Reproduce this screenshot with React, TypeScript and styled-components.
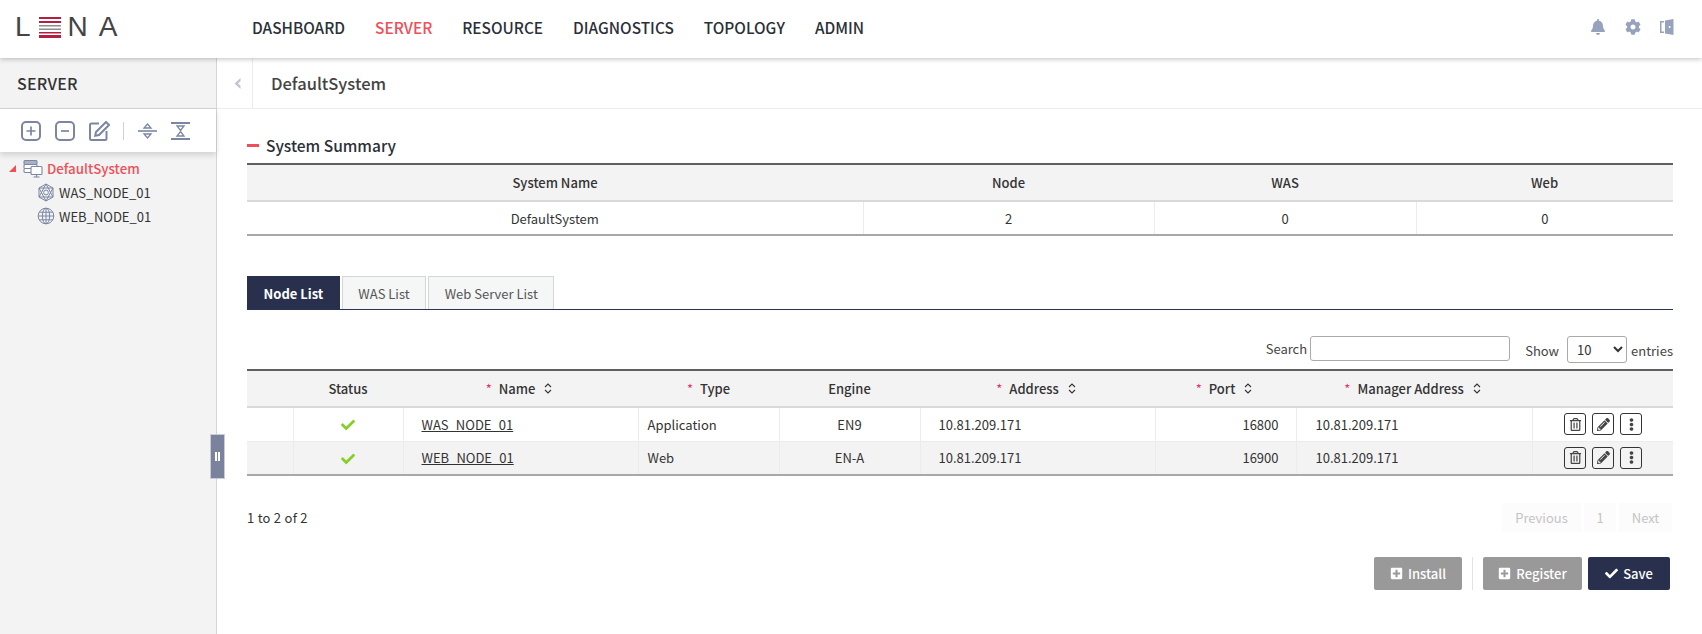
import React, { FC, ReactNode } from 'react';
import styled, { createGlobalStyle } from 'styled-components';
import { FaBell, FaCog, FaCheck, FaRegTrashAlt, FaPencilAlt, FaEllipsisV, FaPlusSquare } from 'react-icons/fa';

const GlobalStyle = createGlobalStyle`
  html, body {
    margin: 0;
    padding: 0;
    height: 100%;
    background: #fff;
    font-family: "Noto Sans CJK KR", "Noto Sans", sans-serif;
    font-size: 13px;
    color: #333;
  }
  * { box-sizing: border-box; }
`;

const Page = styled.div`
  width: 1702px;
  height: 634px;
  display: flex;
  flex-direction: column;
  overflow: hidden;
`;

const Header = styled.header`
  height: 58px;
  flex: none;
  display: flex;
  align-items: center;
  background: #fff;
  box-shadow: 0 1px 5px rgba(0, 0, 0, 0.25);
  position: relative;
  z-index: 3;
  padding: 0 0 4px 15px;
`;

const Logo = styled.div`
  width: 237px;
  flex: none;
  display: flex;
  align-items: center;
  font-family: "Liberation Sans", sans-serif;
  font-size: 28px;
  line-height: 28px;
  color: #444;
`;

const LogoLetter = styled.span<{ $gap: number }>`
  margin-right: ${(p) => p.$gap}px;
  svg { display: block; }
`;

const Nav = styled.nav`
  display: flex;
  gap: 30px;
  flex: 1;
`;

const NavItem = styled.a<{ $active?: boolean }>`
  font-size: 15.4px;
  font-weight: 500;
  color: ${(p) => (p.$active ? '#ee4f58' : '#2b2f38')};
`;

const HeaderIcons = styled.div`
  display: flex;
  align-items: center;
  gap: 19px;
  padding-right: 28px;
  color: #97a3bd;
  font-size: 16px;
  svg { display: block; }
`;

const Body = styled.div`
  flex: 1;
  display: flex;
  min-height: 0;
`;

const Sidebar = styled.aside`
  width: 217px;
  flex: none;
  background: #f3f3f3;
  border-right: 1px solid #d5d5d5;
  position: relative;
`;

const SidebarTitle = styled.div`
  height: 51px;
  padding: 0 17px;
  display: flex;
  align-items: center;
  font-size: 16px;
  font-weight: 500;
  letter-spacing: 0.2px;
  color: #333;
  border-bottom: 1px solid #d5d5d5;
`;

const TreeToolbar = styled.div`
  height: 43px;
  background: #fff;
  box-shadow: 0 3px 6px rgba(0, 0, 0, 0.14);
  display: flex;
  align-items: center;
  padding-left: 21px;
  color: #7c86a3;
  svg { display: block; }
`;

const ToolButton = styled.span<{ $gap?: number }>`
  margin-right: ${(p) => p.$gap ?? 14}px;
`;

const ToolDivider = styled.span`
  width: 1px;
  height: 18px;
  background: #d0d0d0;
  margin: 0 14px 0 0;
`;

const Tree = styled.div`
  padding-top: 4px;
`;

const TreeRow = styled.div<{ $root?: boolean }>`
  height: 24px;
  display: flex;
  align-items: center;
  gap: 4px;
  padding-left: ${(p) => (p.$root ? 9 : 37)}px;
  color: ${(p) => (p.$root ? '#ee4f58' : '#333')};
  font-weight: ${(p) => (p.$root ? 500 : 400)};
  font-size: ${(p) => (p.$root ? 13.3 : 13)}px;
  svg { flex: none; }
`;

const Caret = styled.span`
  width: 0;
  height: 0;
  border-style: solid;
  border-width: 0 0 7px 7px;
  border-color: transparent transparent #ee4f58 transparent;
  margin-right: 3px;
`;

const Handle = styled.div`
  position: absolute;
  left: 210px;
  top: 376px;
  width: 15px;
  height: 45px;
  background: #7a829c;
  border: 1px solid #c9ccd6;
  display: flex;
  align-items: center;
  justify-content: center;
  gap: 1px;
  z-index: 2;
`;

const HandleBar = styled.span`
  width: 2px;
  height: 9px;
  background: #fff;
`;

const Main = styled.main`
  flex: 1;
  min-width: 0;
`;

const SubHeader = styled.div`
  height: 51px;
  display: flex;
  align-items: stretch;
  border-bottom: 1px solid #ececec;
`;

const CollapseCell = styled.div`
  width: 36px;
  padding-left: 5px;
  display: flex;
  align-items: center;
  justify-content: center;
  border-right: 1px solid #ececec;
  color: #c3c6cd;
`;

const PageTitle = styled.div`
  display: flex;
  align-items: center;
  padding-left: 18px;
  font-size: 16.5px;
  font-weight: 500;
  color: #444;
`;

const Content = styled.div`
  padding: 0 29px 0 30px;
`;

const SectionTitle = styled.h2`
  margin: 0;
  height: 54px;
  padding-top: 18px;
  display: flex;
  align-items: center;
  gap: 7px;
  font-size: 15.5px;
  line-height: 22px;
  font-weight: 500;
  color: #2b2f38;
`;

const SectionDash = styled.span`
  width: 12px;
  height: 3px;
  background: #ee4f58;
`;

const Table = styled.table`
  width: 1426px;
  table-layout: fixed;
  border-collapse: collapse;
  border-top: 2px solid #5f5f5f;
  border-bottom: 2px solid #a8a8a8;
`;

const Th = styled.th<{ $sortable?: boolean }>`
  height: 37px;
  padding: 0 ${(p) => (p.$sortable ? 3 : 0)}px 0 0;
  background: #f3f3f3;
  border-bottom: 2px solid #d9d9d9;
  font-weight: 500;
  color: #333;
  text-align: center;
`;

const Tr = styled.tr<{ $alt?: boolean }>`
  background: ${(p) => (p.$alt ? '#f3f3f3' : '#fff')};
`;

const Td = styled.td<{ $align?: string; $pad?: number }>`
  height: 34px;
  padding: 0 ${(p) => p.$pad ?? 0}px;
  border-left: 1px solid #ececec;
  border-top: 1px solid #ececec;
  text-align: ${(p) => p.$align ?? 'center'};
  color: #333;
  &:first-child { border-left: 0; }
`;

const Tabs = styled.div`
  margin-top: 40px;
  height: 34px;
  display: flex;
  gap: 2px;
  border-bottom: 1px solid #2b3350;
`;

const Tab = styled.div<{ $active?: boolean }>`
  height: 33px;
  padding: 0 15.5px;
  display: flex;
  align-items: center;
  font-weight: ${(p) => (p.$active ? 700 : 400)};
  color: ${(p) => (p.$active ? '#fff' : '#555')};
  background: ${(p) => (p.$active ? '#28304d' : '#f5f6f6')};
  border: 1px solid ${(p) => (p.$active ? '#28304d' : '#d6d6d6')};
  border-bottom: 0;
`;

const TableControls = styled.div`
  height: 59px;
  display: flex;
  justify-content: flex-end;
  align-items: flex-start;
  padding-top: 26px;
  color: #444;
`;

const Label = styled.span`
  line-height: 25px;
`;

const SearchInput = styled.input`
  width: 200px;
  height: 25px;
  margin: 0 15px 0 3px;
  border: 1px solid #aaa;
  border-radius: 3px;
  background: #fff;
`;

const PageSize = styled.select`
  width: 60px;
  height: 27px;
  margin: 0 4px 0 8px;
  padding-left: 5px;
  border: 1px solid #aaa;
  border-radius: 3px;
  background: #fff;
  font: inherit;
  color: #333;
`;

const ShowLabel = styled(Label)`
  line-height: 27px;
  padding-top: 1px;
`;

const HeadLabel = styled.span`
  display: inline-flex;
  align-items: center;
  gap: 9px;
`;

const Required = styled.span`
  color: #e8346a;
  font-weight: 400;
  margin-right: 7px;
`;

const NodeLink = styled.a`
  color: #333;
  text-decoration: underline;
`;

const OkIcon = styled(FaCheck)`
  color: #85d02a;
  font-size: 14px;
  vertical-align: middle;
  position: relative;
  top: -1px;
`;

const Actions = styled.div`
  display: flex;
  justify-content: flex-end;
  gap: 6px;
  padding-right: 31px;
`;

const ActionButton = styled.button`
  width: 22px;
  height: 22px;
  padding: 0;
  display: flex;
  align-items: center;
  justify-content: center;
  background: transparent;
  border: 1px solid #333;
  border-radius: 3px;
  color: #444;
  font-size: 13px;
`;

const Footer = styled.div`
  margin-top: 27px;
  height: 29px;
  display: flex;
  justify-content: space-between;
  align-items: center;
`;

const FooterInfo = styled.span`
  letter-spacing: 0.25px;
`;

const Pager = styled.div`
  display: flex;
  gap: 3px;
  margin-right: 1px;
`;

const PagerItem = styled.span<{ $w: number }>`
  width: ${(p) => p.$w}px;
  height: 29px;
  display: flex;
  align-items: center;
  justify-content: center;
  background: #fcfcfc;
  color: #c4c4c4;
`;

const ButtonRow = styled.div`
  margin-top: 25px;
  display: flex;
  justify-content: flex-end;
  align-items: center;
  padding-right: 3px;
`;

const Button = styled.button<{ $primary?: boolean; $w: number; $gap?: number }>`
  width: ${(p) => p.$w}px;
  height: 33px;
  margin-left: ${(p) => p.$gap ?? 0}px;
  display: flex;
  align-items: center;
  justify-content: center;
  gap: 5px;
  border: 0;
  border-radius: 2px;
  background: ${(p) => (p.$primary ? '#28304d' : '#999')};
  color: #fff;
  font: inherit;
  font-weight: 500;
`;

const ButtonDivider = styled.span`
  width: 1px;
  height: 33px;
  background: #e2e2e2;
  margin: 0 10px 0 10px;
`;

const SortIcon: FC = () => (
  <svg width="8" height="11" viewBox="0 0 8 11" fill="none" stroke="#333" strokeWidth="1.1">
    <path d="M1 4l3-3 3 3M1 7l3 3 3-3" />
  </svg>
);

const ExitIcon: FC = () => (
  <svg width="14" height="16" viewBox="0 0 14 16" fill="#97a3bd">
    <path d="M0 2h4v1.4H1.5v9.2H4V14H0z" />
    <path d="M5 1.5L13.5 0v16L5 14.5zM9.6 7a1 1 0 100 2 1 1 0 000-2z" fillRule="evenodd" />
  </svg>
);

const SquarePlus: FC = () => (
  <svg width="20" height="20" viewBox="0 0 20 20" fill="none" stroke="currentColor" strokeWidth="2">
    <rect x="1" y="1" width="18" height="18" rx="4" />
    <path d="M10 5.5v9M5.5 10h9" strokeWidth="1.7" />
  </svg>
);

const SquareMinus: FC = () => (
  <svg width="20" height="20" viewBox="0 0 20 20" fill="none" stroke="currentColor" strokeWidth="2">
    <rect x="1" y="1" width="18" height="18" rx="4" />
    <path d="M6 10h8" strokeWidth="1.7" />
  </svg>
);

const SquareEdit: FC = () => (
  <svg width="21" height="20" viewBox="0 0 21 20" fill="none" stroke="currentColor" strokeWidth="2">
    <path d="M10 2.5H2.5a1.5 1.5 0 00-1.5 1.5v13.5A1.5 1.5 0 002.5 19H16a1.5 1.5 0 001.5-1.5V10" />
    <path d="M7 11l10-10 3 3-10 10-3.8.8z" />
  </svg>
);

const ExpandIcon: FC = () => (
  <svg width="19" height="18" viewBox="0 0 19 18" fill="none" stroke="currentColor" strokeWidth="1.3">
    <path d="M0 9h19" strokeWidth="1.6" />
    <path d="M9.5 2l3.5 4H6zM9.5 16l3.5-4H6z" />
  </svg>
);

const CollapseIcon: FC = () => (
  <svg width="19" height="18" viewBox="0 0 19 18" fill="none" stroke="currentColor" strokeWidth="1.3">
    <path d="M0 1h19M0 17h19" strokeWidth="1.8" />
    <path d="M9.5 8.5l3.5-4.5H6zM9.5 9.5L13 14H6z" />
  </svg>
);

const SystemIcon: FC = () => (
  <svg width="20" height="19" viewBox="0 0 20 19" fill="#fff" stroke="#7c86a3" strokeWidth="1.1">
    <rect x="1" y="1.5" width="13" height="4" rx="1" fill="#a9b0c4" />
    <rect x="1" y="5.5" width="13" height="4" rx="1" />
    <rect x="1" y="9.5" width="8" height="4" rx="1" />
    <rect x="8" y="7.5" width="11" height="8" rx="1" />
    <path d="M13.5 15.5v2M10.5 18h6" />
  </svg>
);

const ClusterIcon: FC = () => (
  <svg width="18" height="19" viewBox="0 0 18 19" fill="none" stroke="#7c86a3" strokeWidth="1">
    <path d="M9 1l7 4v9l-7 4-7-4V5z" />
    <path d="M9 1L2 14h14zM9 18L2 5h14z" />
    <circle cx="9" cy="9.5" r="2.4" />
  </svg>
);

const GlobeIcon: FC = () => (
  <svg width="18" height="18" viewBox="0 0 18 18" fill="none" stroke="#7c86a3" strokeWidth="1">
    <circle cx="9" cy="9" r="7.8" />
    <ellipse cx="9" cy="9" rx="3.6" ry="7.8" />
    <path d="M9 1v16M1.2 9h15.6M2.4 5.2h13.2M2.4 12.8h13.2" />
  </svg>
);

const LogoMark: FC = () => (
  <svg width="22" height="21" viewBox="0 0 22 21">
    <rect y="0" width="22" height="2" fill="#b3203f" />
    <rect y="4" width="22" height="2" fill="#b3203f" />
    <rect y="8" width="22" height="1.5" fill="#8d8d92" />
    <rect y="11.5" width="22" height="1.5" fill="#8d8d92" />
    <rect y="15" width="22" height="1.5" fill="#b3203f" />
    <rect y="18" width="22" height="3" fill="#b3203f" />
  </svg>
);

const Heading: FC<{ required?: boolean; sortable?: boolean; children?: ReactNode }> = ({ required, sortable, children }) => (
  <Th $sortable={sortable}>
    {required && <Required>*</Required>}
    <HeadLabel>
      {children}
      {sortable && <SortIcon />}
    </HeadLabel>
  </Th>
);

const navItems = ['DASHBOARD', 'SERVER', 'RESOURCE', 'DIAGNOSTICS', 'TOPOLOGY', 'ADMIN'];

const nodes = [
  { name: 'WAS_NODE_01', type: 'Application', engine: 'EN9', port: 16800 },
  { name: 'WEB_NODE_01', type: 'Web', engine: 'EN-A', port: 16900 },
];

const App: FC = () => (
  <Page>
    <GlobalStyle />
    <Header>
      <Logo>
        <LogoLetter $gap={8}>L</LogoLetter>
        <LogoLetter $gap={7}><LogoMark /></LogoLetter>
        <LogoLetter $gap={11}>N</LogoLetter>
        <LogoLetter $gap={0}>A</LogoLetter>
      </Logo>
      <Nav>
        {navItems.map((item) => (
          <NavItem key={item} $active={item === 'SERVER'}>{item}</NavItem>
        ))}
      </Nav>
      <HeaderIcons>
        <FaBell />
        <FaCog />
        <ExitIcon />
      </HeaderIcons>
    </Header>
    <Body>
      <Sidebar>
        <SidebarTitle>SERVER</SidebarTitle>
        <TreeToolbar>
          <ToolButton><SquarePlus /></ToolButton>
          <ToolButton><SquareMinus /></ToolButton>
          <ToolButton $gap={13}><SquareEdit /></ToolButton>
          <ToolDivider />
          <ToolButton><ExpandIcon /></ToolButton>
          <ToolButton><CollapseIcon /></ToolButton>
        </TreeToolbar>
        <Tree>
          <TreeRow $root><Caret /><SystemIcon />DefaultSystem</TreeRow>
          <TreeRow><ClusterIcon />WAS_NODE_01</TreeRow>
          <TreeRow><GlobeIcon />WEB_NODE_01</TreeRow>
        </Tree>
        <Handle><HandleBar /><HandleBar /></Handle>
      </Sidebar>
      <Main>
        <SubHeader>
          <CollapseCell>
            <svg width="7" height="11" viewBox="0 0 7 11" fill="currentColor">
              <path d="M6.5 0v3.2L4 5.5l2.5 2.3V11L0.5 5.5z" />
            </svg>
          </CollapseCell>
          <PageTitle>DefaultSystem</PageTitle>
        </SubHeader>
        <Content>
          <SectionTitle><SectionDash />System Summary</SectionTitle>
          <Table>
            <colgroup>
              <col style={{ width: 616 }} />
              <col style={{ width: 291 }} />
              <col style={{ width: 262 }} />
              <col style={{ width: 257 }} />
            </colgroup>
            <thead>
              <tr>
                <Th>System Name</Th>
                <Th>Node</Th>
                <Th>WAS</Th>
                <Th>Web</Th>
              </tr>
            </thead>
            <tbody>
              <Tr>
                <Td>DefaultSystem</Td>
                <Td>2</Td>
                <Td>0</Td>
                <Td>0</Td>
              </Tr>
            </tbody>
          </Table>
          <Tabs>
            <Tab $active>Node List</Tab>
            <Tab>WAS List</Tab>
            <Tab>Web Server List</Tab>
          </Tabs>
          <TableControls>
            <Label>Search</Label>
            <SearchInput />
            <ShowLabel>Show</ShowLabel>
            <PageSize defaultValue="10">
              <option>10</option>
              <option>25</option>
              <option>50</option>
            </PageSize>
            <ShowLabel>entries</ShowLabel>
          </TableControls>
          <Table>
            <colgroup>
              <col style={{ width: 46 }} />
              <col style={{ width: 110 }} />
              <col style={{ width: 235 }} />
              <col style={{ width: 141 }} />
              <col style={{ width: 141 }} />
              <col style={{ width: 235 }} />
              <col style={{ width: 141 }} />
              <col style={{ width: 236 }} />
              <col style={{ width: 141 }} />
            </colgroup>
            <thead>
              <tr>
                <Heading />
                <Heading>Status</Heading>
                <Heading required sortable>Name</Heading>
                <Heading required>Type</Heading>
                <Heading>Engine</Heading>
                <Heading required sortable>Address</Heading>
                <Heading required sortable>Port</Heading>
                <Heading required sortable>Manager Address</Heading>
                <Heading />
              </tr>
            </thead>
            <tbody>
              {nodes.map((node, i) => (
                <Tr key={node.name} $alt={i === 1}>
                  <Td />
                  <Td><OkIcon /></Td>
                  <Td $align="left" $pad={18}><NodeLink>{node.name}</NodeLink></Td>
                  <Td $align="left" $pad={9}>{node.type}</Td>
                  <Td>{node.engine}</Td>
                  <Td $align="left" $pad={18}>10.81.209.171</Td>
                  <Td $align="right" $pad={17}>{node.port}</Td>
                  <Td $align="left" $pad={19}>10.81.209.171</Td>
                  <Td>
                    <Actions>
                      <ActionButton><FaRegTrashAlt /></ActionButton>
                      <ActionButton><FaPencilAlt /></ActionButton>
                      <ActionButton><FaEllipsisV /></ActionButton>
                    </Actions>
                  </Td>
                </Tr>
              ))}
            </tbody>
          </Table>
          <Footer>
            <FooterInfo>1 to 2 of 2</FooterInfo>
            <Pager>
              <PagerItem $w={79}>Previous</PagerItem>
              <PagerItem $w={32}>1</PagerItem>
              <PagerItem $w={53}>Next</PagerItem>
            </Pager>
          </Footer>
          <ButtonRow>
            <Button $w={88}><FaPlusSquare />Install</Button>
            <ButtonDivider />
            <Button $w={99}><FaPlusSquare />Register</Button>
            <Button $w={82} $primary $gap={6}><FaCheck />Save</Button>
          </ButtonRow>
        </Content>
      </Main>
    </Body>
  </Page>
);

export default App;
